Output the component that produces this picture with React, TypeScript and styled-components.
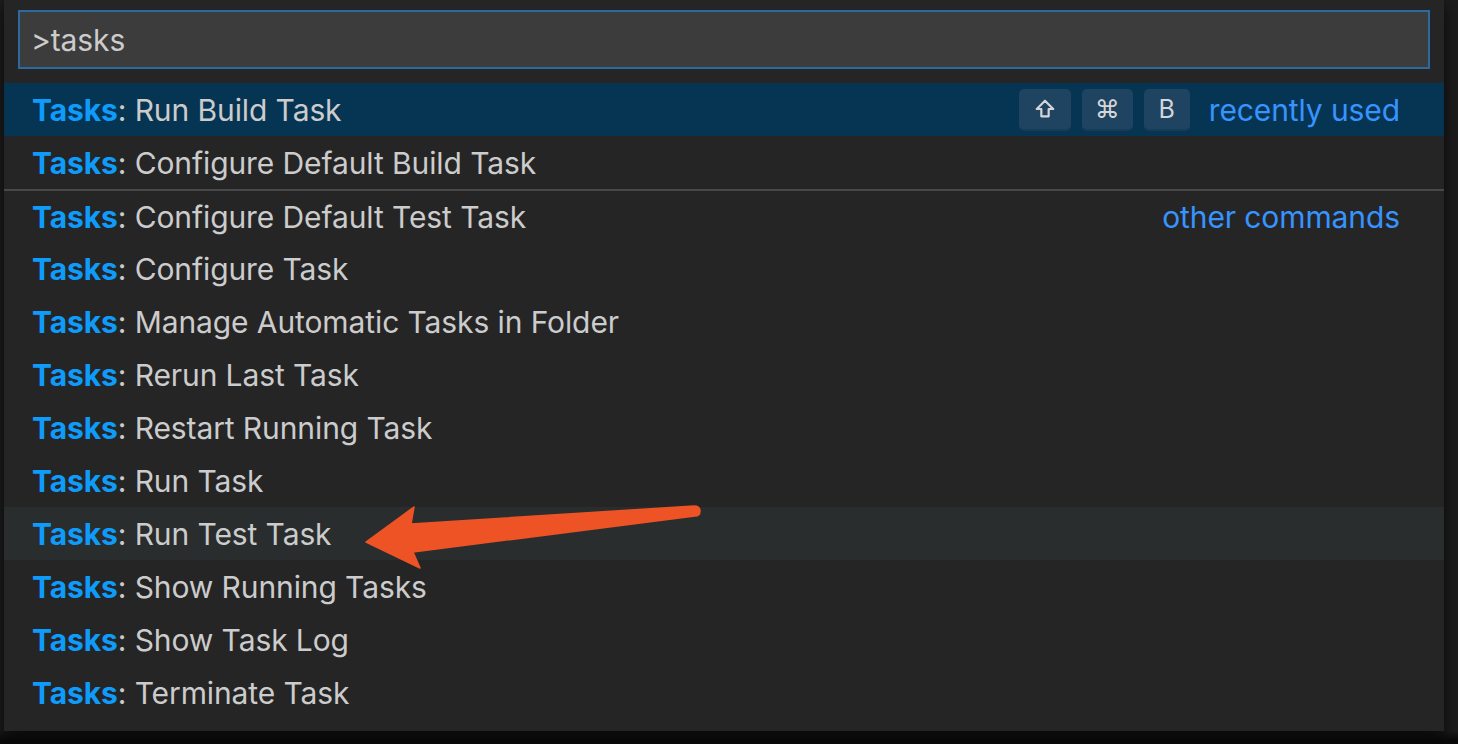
import React from "react";
import styled, { createGlobalStyle } from "styled-components";

const Global = createGlobalStyle`
  html, body { margin: 0; padding: 0; background: #1b1b1b; }
  body { width: 1458px; height: 744px; overflow: hidden; font-family: "Inter", "Liberation Sans", sans-serif; }
`;

const Screen = styled.div`
  position: relative;
  width: 1458px;
  height: 744px;
  background: linear-gradient(to bottom, #1c1c1c 0, #1c1c1c 730px, #0a0a0a 740px);
  display: flex;
  padding-left: 4px;
  box-sizing: border-box;
`;

const Palette = styled.div`
  width: 1440px;
  height: 731px;
  background: #252526;
  display: flex;
  flex-direction: column;
  box-shadow: 0 6px 14px rgba(0, 0, 0, 0.7);
`;

const InputWrap = styled.div`
  padding: 10px 14px 14px 14px;
`;

const Input = styled.div`
  height: 59px;
  box-sizing: border-box;
  border: 2px solid #2a6aa0;
  background: #3c3c3c;
  color: #cccccc;
  font-size: 30px;
  display: flex;
  align-items: center;
  padding-left: 11px;
  letter-spacing: -0.1px;
`;

const List = styled.div`
  display: flex;
  flex-direction: column;
`;

const Row = styled.div<{ $state?: "selected" | "hover"; $sep?: boolean }>`
  height: 53px;
  box-sizing: border-box;
  display: flex;
  align-items: center;
  padding: 0 44px 0 28px;
  font-size: 30px;
  color: #cccccc;
  background: ${(p) =>
    p.$state === "selected" ? "#063554" : p.$state === "hover" ? "#2a2d2e" : "transparent"};
  border-top: ${(p) => (p.$sep ? "2px solid #48484b" : "none")};
  letter-spacing: -0.1px;
`;

const Label = styled.div`
  flex: 1;
  white-space: nowrap;
`;

const Highlight = styled.span`
  color: #0e9bfa;
  font-weight: 700;
`;

const Keys = styled.div`
  display: flex;
  gap: 11px;
  margin-right: 19px;
`;

const Key = styled.span<{ $w: number }>`
  width: ${(p) => p.$w}px;
  height: 42px;
  box-sizing: border-box;
  border-radius: 5px;
  background: #1f4462;
  border-bottom: 2px solid #1a3b55;
  color: #d6d6d6;
  font-size: 25px;
  display: flex;
  align-items: center;
  justify-content: center;
`;

const Tag = styled.span`
  color: #3794ff;
  font-size: 30px;
  white-space: nowrap;
`;

const ArrowSvg = styled.svg`
  position: absolute;
  left: 0;
  top: 0;
  pointer-events: none;
`;

const items: { text: string; state?: "selected" | "hover"; sep?: boolean; tag?: string; keys?: boolean }[] = [
  { text: "Run Build Task", state: "selected", tag: "recently used", keys: true },
  { text: "Configure Default Build Task" },
  { text: "Configure Default Test Task", sep: true, tag: "other commands" },
  { text: "Configure Task" },
  { text: "Manage Automatic Tasks in Folder" },
  { text: "Rerun Last Task" },
  { text: "Restart Running Task" },
  { text: "Run Task" },
  { text: "Run Test Task", state: "hover" },
  { text: "Show Running Tasks" },
  { text: "Show Task Log" },
  { text: "Terminate Task" },
];

export default function App() {
  return (
    <>
      <Global />
      <Screen>
        <Palette>
          <InputWrap>
            <Input>&gt;tasks</Input>
          </InputWrap>
          <List>
            {items.map((it) => (
              <Row key={it.text} $state={it.state} $sep={it.sep}>
                <Label>
                  <Highlight>Tasks</Highlight>: {it.text}
                </Label>
                {it.keys && (
                  <Keys>
                    <Key $w={52}>
                      <svg width="22" height="22" viewBox="0 0 24 24" fill="none" stroke="#d6d6d6" strokeWidth="2.4" strokeLinejoin="round">
                        <path d="M12 3 L21 12 H16 V20 H8 V12 H3 Z" />
                      </svg>
                    </Key>
                    <Key $w={51}>⌘</Key>
                    <Key $w={46}>B</Key>
                  </Keys>
                )}
                {it.tag && <Tag>{it.tag}</Tag>}
              </Row>
            ))}
          </List>
        </Palette>
        <ArrowSvg width="1458" height="744" viewBox="0 0 1458 744">
          <path
            d="M366 542 L414 507 L411 524 L694 506 Q700 506 700 511 Q700 516 695 516 L413 552 L420 568 Z"
            fill="#ee5326"
            stroke="#ee5326"
            strokeWidth="1.5"
            strokeLinejoin="round"
          />
        </ArrowSvg>
      </Screen>
    </>
  );
}
